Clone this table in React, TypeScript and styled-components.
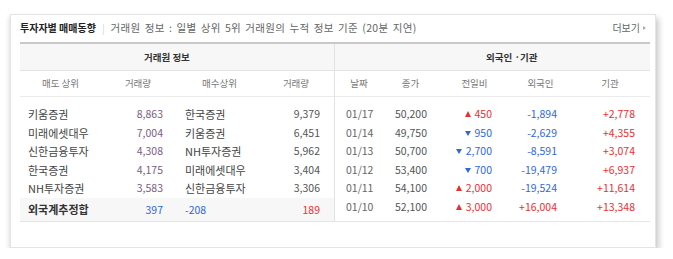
import React from 'react'
import styled, { createGlobalStyle } from 'styled-components'

const GlobalStyle = createGlobalStyle`
  html, body {
    margin: 0;
    padding: 0;
    background: #fff;
  }
  body {
    font-family: "Noto Sans CJK KR", "Noto Sans", sans-serif;
    color: #444;
  }
`

const RED = '#ee2d32'
const BLUE = '#2f68d8'

const Page = styled.div`
  padding: 14px 0 0 10px;
`

const Card = styled.section`
  width: 646px;
  height: 234px;
  box-sizing: border-box;
  background: #fff;
  border: 1px solid #e4e4e4;
  box-shadow: 3px 4px 6px rgba(0, 0, 0, 0.2), -2px 2px 4px rgba(0, 0, 0, 0.08);
  padding: 0 5px 0 9px;
`

const TitleRow = styled.div`
  display: flex;
  align-items: center;
  height: 29px;
  box-sizing: border-box;
  padding-bottom: 2px;
  border-bottom: 2px solid #c9c9c9;
`

const Title = styled.h2`
  margin: 0;
  font-size: 10px;
  font-weight: 700;
  color: #222;
`

const Bar = styled.span`
  margin: 0 6px;
  font-size: 10px;
  color: #d4d4d4;
`

const Desc = styled.span`
  font-size: 10.5px;
  color: #666;
  letter-spacing: 0.35px;
  word-spacing: 1.5px;
`

const More = styled.a`
  margin-left: auto;
  margin-right: 4px;
  font-size: 10px;
  color: #666;
  display: flex;
  align-items: center;
  gap: 3px;
  &::after {
    content: '';
    border-top: 2.5px solid transparent;
    border-bottom: 2.5px solid transparent;
    border-left: 3px solid #aaa;
  }
`

const Tables = styled.div`
  display: flex;
  border-bottom: 1px solid #e4e4e4;
`

const Half = styled.div<{ $w?: number }>`
  box-sizing: border-box;
  ${(p) => (p.$w ? `width: ${p.$w}px; border-right: 1px solid #e2e2e2;` : 'flex: 1;')}
`

const HeadBar = styled.div<{ $pl: number }>`
  height: 26px;
  line-height: 26px;
  background: #f7f7f7;
  border-bottom: 1px solid #e2e2e2;
  padding-left: ${(p) => p.$pl}px;
  font-size: 9.5px;
  font-weight: 700;
  color: #333;
`

const SubHead = styled.div<{ $cols: string }>`
  display: grid;
  grid-template-columns: ${(p) => p.$cols};
  height: 25px;
  line-height: 25px;
  border-bottom: 1px solid #ebebeb;
  font-size: 9.5px;
  color: #777;
  text-align: center;
`

const Body = styled.div`
  padding-top: 8px;
`

const Row = styled.div<{ $cols: string }>`
  display: grid;
  grid-template-columns: ${(p) => p.$cols};
  height: 18.5px;
  line-height: 18.5px;
  white-space: nowrap;
`

const TotalRow = styled(Row)`
  height: 23px;
  line-height: 23px;
  background: #f7f7f7;
`

const Cell = styled.div<{ $right?: boolean; $pl?: number; $color?: string; $bold?: boolean; $name?: boolean }>`
  text-align: ${(p) => (p.$right ? 'right' : 'left')};
  padding-left: ${(p) => p.$pl ?? 0}px;
  font-size: ${(p) => (p.$name ? '11px' : '10.5px')};
  font-weight: ${(p) => (p.$bold ? 700 : 400)};
  color: ${(p) => p.$color ?? '#555'};
`

const Arrow = styled.span<{ $up: boolean }>`
  display: inline-block;
  margin-right: 4px;
  vertical-align: 1px;
  border-left: ${(p) => (p.$up ? 3.5 : 3)}px solid transparent;
  border-right: ${(p) => (p.$up ? 3.5 : 3)}px solid transparent;
  ${(p) =>
    p.$up ? `border-bottom: 6px solid ${RED};` : `border-top: 5px solid ${BLUE};`}
`

const LEFT_HEAD = '81px 74px 89px 64px'
const LEFT_COLS = '95px 48px 87px 70px'
const RIGHT_HEAD = '48px 55px 73px 59px 80px'
const RIGHT_COLS = '50px 42px 65px 65px 78px'

const sells = [
  ['키움증권', '8,863'],
  ['미래에셋대우', '7,004'],
  ['신한금융투자', '4,308'],
  ['한국증권', '4,175'],
  ['NH투자증권', '3,583'],
]

const buys = [
  ['한국증권', '9,379'],
  ['키움증권', '6,451'],
  ['NH투자증권', '5,962'],
  ['미래에셋대우', '3,404'],
  ['신한금융투자', '3,306'],
]

const daily = [
  { date: '01/17', close: '50,200', up: true, diff: '450', foreign: '-1,894', inst: '+2,778' },
  { date: '01/14', close: '49,750', up: false, diff: '950', foreign: '-2,629', inst: '+4,355' },
  { date: '01/13', close: '50,700', up: false, diff: '2,700', foreign: '-8,591', inst: '+3,074' },
  { date: '01/12', close: '53,400', up: false, diff: '700', foreign: '-19,479', inst: '+6,937' },
  { date: '01/11', close: '54,100', up: true, diff: '2,000', foreign: '-19,524', inst: '+11,614' },
  { date: '01/10', close: '52,100', up: true, diff: '3,000', foreign: '+16,004', inst: '+13,348' },
]

const signColor = (v: string) => (v.startsWith('-') ? BLUE : RED)

export default function App() {
  return (
    <>
      <GlobalStyle />
      <Page>
        <Card>
          <TitleRow>
            <Title>투자자별 매매동향</Title>
            <Bar>|</Bar>
            <Desc>거래원 정보 : 일별 상위 5위 거래원의 누적 정보 기준 (20분 지연)</Desc>
            <More>더보기</More>
          </TitleRow>
          <Tables>
            <Half $w={315}>
              <HeadBar $pl={124}>거래원 정보</HeadBar>
              <SubHead $cols={LEFT_HEAD}>
                <span>매도 상위</span>
                <span>거래량</span>
                <span>매수상위</span>
                <span>거래량</span>
              </SubHead>
              <Body>
                {sells.map((s, i) => (
                  <Row key={i} $cols={LEFT_COLS}>
                    <Cell $name $pl={8} $color="#444">{s[0]}</Cell>
                    <Cell $right $color="#7d5c80">{s[1]}</Cell>
                    <Cell $name $pl={22} $color="#444">{buys[i][0]}</Cell>
                    <Cell $right>{buys[i][1]}</Cell>
                  </Row>
                ))}
              </Body>
              <TotalRow $cols={LEFT_COLS}>
                <Cell $name $bold $pl={8} $color="#333">외국계추정합</Cell>
                <Cell $right $color={BLUE}>397</Cell>
                <Cell $pl={22} $color={BLUE}>-208</Cell>
                <Cell $right $color={RED}>189</Cell>
              </TotalRow>
            </Half>
            <Half>
              <HeadBar $pl={151}>외국인 ·기관</HeadBar>
              <SubHead $cols={RIGHT_HEAD}>
                <span>날짜</span>
                <span>종가</span>
                <span>전일비</span>
                <span>외국인</span>
                <span>기관</span>
              </SubHead>
              <Body>
                {daily.map((d) => (
                  <Row key={d.date} $cols={RIGHT_COLS}>
                    <Cell $pl={11} $color="#666">{d.date}</Cell>
                    <Cell $right>{d.close}</Cell>
                    <Cell $right $color={d.up ? RED : BLUE}>
                      <Arrow $up={d.up} />
                      {d.diff}
                    </Cell>
                    <Cell $right $color={signColor(d.foreign)}>{d.foreign}</Cell>
                    <Cell $right $color={RED}>{d.inst}</Cell>
                  </Row>
                ))}
              </Body>
            </Half>
          </Tables>
        </Card>
      </Page>
    </>
  )
}
